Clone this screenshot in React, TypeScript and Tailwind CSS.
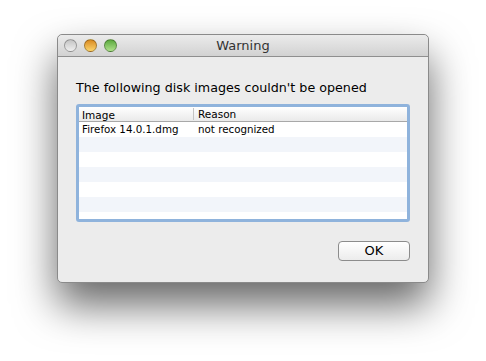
import React from 'react'

const rows = [
  { image: 'Firefox 14.0.1.dmg', reason: 'not recognized' },
  { image: '', reason: '' },
  { image: '', reason: '' },
  { image: '', reason: '' },
  { image: '', reason: '' },
  { image: '', reason: '' },
]

function Light({ className }: { className: string }) {
  return <span className={`block w-[13px] h-[13px] rounded-full border border-black/30 ${className}`} />
}

export default function App() {
  return (
    <div className="w-[486px] h-[361px] bg-white pt-[34px] pl-[57px] overflow-hidden" style={{ fontFamily: '"DejaVu Sans", "Liberation Sans", sans-serif' }}>
      <div className="w-[372px] h-[249px] flex flex-col rounded-[5px] bg-[#ececec] border border-[#8a8a8a] shadow-[0_22px_42px_rgba(0,0,0,0.6)]">
        {/* title bar */}
        <div className="relative h-[22px] flex items-center justify-center rounded-t-[5px] bg-gradient-to-b from-[#ebebeb] to-[#d2d2d2] border-b border-[#8f8f8f]">
          <div className="absolute left-[6px] top-[4px] flex gap-[7px]">
            <Light className="bg-gradient-to-b from-[#c4c4c4] to-[#f0f0f0]" />
            <Light className="bg-gradient-to-b from-[#d98a1c] to-[#fbd46a]" />
            <Light className="bg-gradient-to-b from-[#5aa93b] to-[#aee18b]" />
          </div>
          <span className="text-[13px] text-[#333]">Warning</span>
        </div>

        <div className="flex-1 flex flex-col px-[18px]">
          <p className="mt-[23px] text-[12.7px] leading-[16px] text-black">The following disk images couldn't be opened</p>

          <div className="mt-[8px] h-[118px] rounded-[3px] border-[3px] border-[#8fb3dc] bg-white overflow-hidden">
            <div className="h-[15px] flex text-[10.5px] leading-[14px] text-black bg-gradient-to-b from-white to-[#eaeaea] border-b border-[#a8a8a8]">
              <div className="w-[115px] pl-[3px] border-r border-[#c4c4c4] my-[1px]">Image</div>
              <div className="pl-[4px]">Reason</div>
            </div>
            {rows.map((r, i) => (
              <div key={i} className={`h-[15px] flex text-[10.3px] leading-[15px] text-black ${i % 2 ? 'bg-[#f2f5fa]' : 'bg-white'}`}>
                <div className="w-[116px] pl-[3px]">{r.image}</div>
                <div className="pl-[3px]">{r.reason}</div>
              </div>
            ))}
          </div>

          <div className="flex justify-end mt-[19px]">
            <button className="w-[72px] h-[20px] rounded-[4px] border border-[#8c8c8c] bg-gradient-to-b from-white to-[#ececec] text-[13px] leading-[18px] text-black">OK</button>
          </div>
        </div>
      </div>
    </div>
  )
}
